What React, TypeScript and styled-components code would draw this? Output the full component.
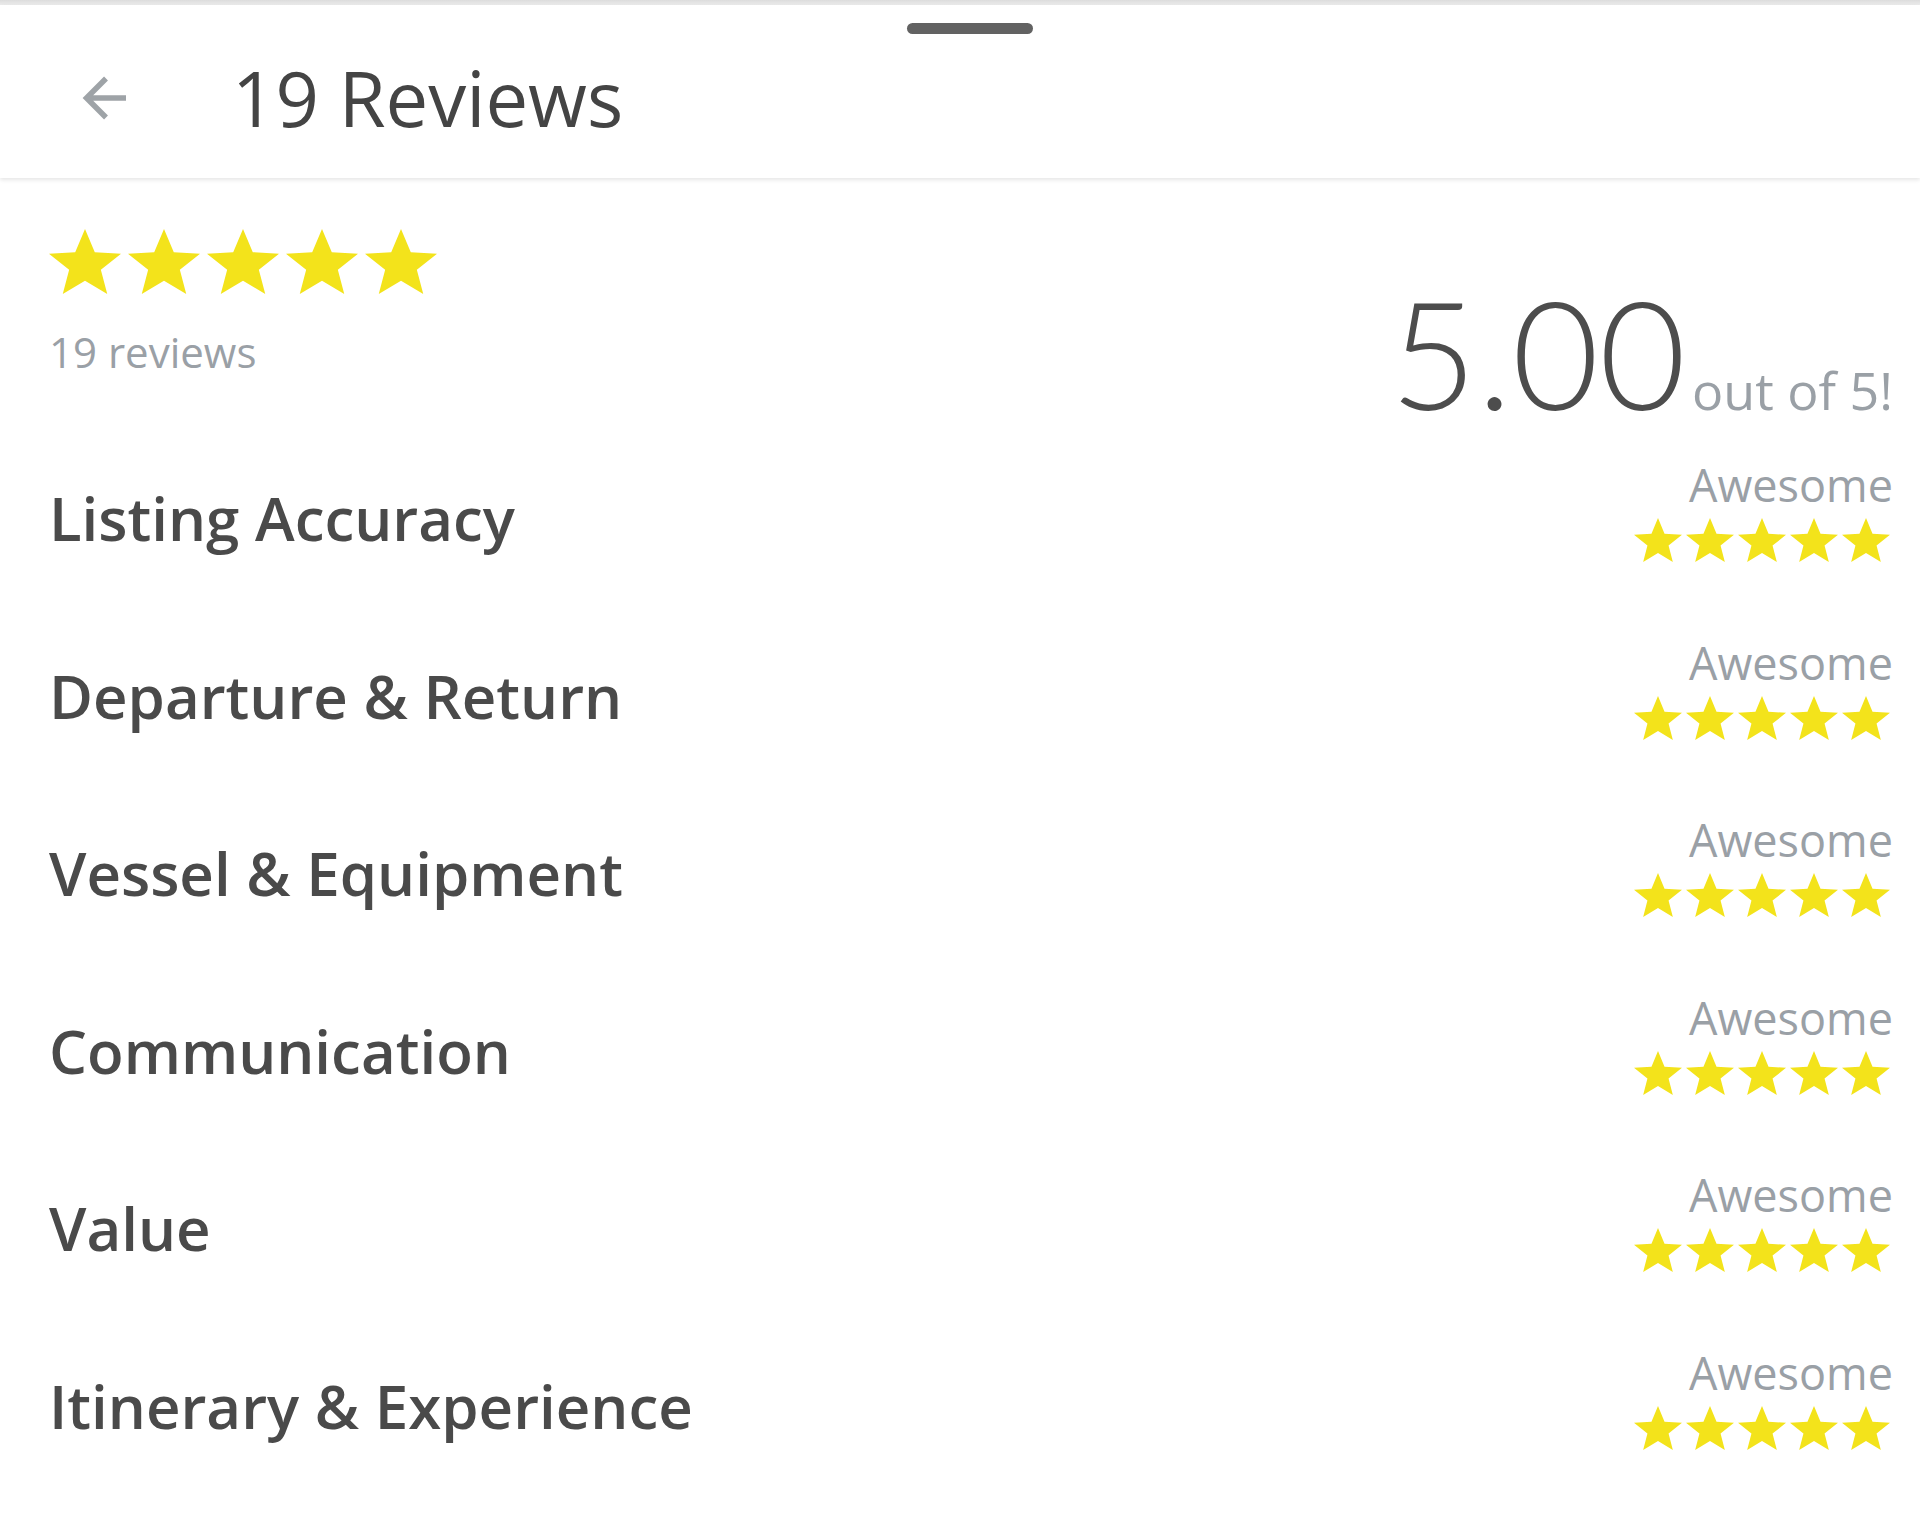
import React from 'react';
import styled, { createGlobalStyle } from 'styled-components';

const GlobalStyle = createGlobalStyle`
  html, body {
    margin: 0;
    padding: 0;
    background: #ffffff;
  }
  body {
    font-family: 'Open Sans', 'Noto Sans', 'Liberation Sans', sans-serif;
    color: #4a4a4a;
  }
`;

// slightly chubby star, like the rating widget in the app
const STAR_POINTS =
  '50,0 63.6,33.9 100,36.3 72,59.7 80.9,95.1 50,75.7 19.1,95.1 28,59.7 0,36.3 36.4,33.9';

const categories = [
  'Listing Accuracy',
  'Departure & Return',
  'Vessel & Equipment',
  'Communication',
  'Value',
  'Itinerary & Experience',
];

const Page = styled.div`
  width: 100%;
  min-height: 1515px;
  display: flex;
  flex-direction: column;
`;

const TopEdge = styled.div`
  height: 5px;
  background: linear-gradient(#dcdcdc, #ececec);
`;

const Header = styled.header`
  display: flex;
  flex-direction: column;
  padding-bottom: 35px;
  background: #fff;
  box-shadow: 0 2px 4px rgba(0, 0, 0, 0.1);
  position: relative;
  z-index: 1;
`;

const Handle = styled.div`
  align-self: center;
  width: 126px;
  height: 11px;
  margin: 18px 0 0 20px;
  border-radius: 6px;
  background: #626262;
`;

const TitleBar = styled.div`
  display: flex;
  align-items: center;
  margin-top: 18px;
  padding-left: 82px;
`;

const BackButton = styled.button`
  display: flex;
  align-items: center;
  justify-content: center;
  width: 46px;
  height: 46px;
  padding: 0;
  border: none;
  background: none;
  cursor: pointer;
`;

const Title = styled.h1`
  margin: 0 0 0 104px;
  font-size: 76px;
  line-height: 1.2;
  font-weight: 400;
  color: #444;
`;

const Summary = styled.section`
  display: flex;
  justify-content: space-between;
  align-items: flex-start;
  padding: 51px 27px 19px 49px;
`;

const SummaryLeft = styled.div`
  display: flex;
  flex-direction: column;
`;

const StarRow = styled.div<{ $gap: number }>`
  display: flex;
  gap: ${p => p.$gap}px;
`;

const ReviewCount = styled.div`
  margin-top: 33px;
  font-size: 42px;
  line-height: 1.2;
  color: #9aa0a6;
`;

const Score = styled.div`
  display: flex;
  align-items: baseline;
  margin-top: 48px;
`;

// the app uses a light cut for the big number
const ScoreValue = styled.span`
  font-family: 'Lato', 'Open Sans', sans-serif;
  font-size: 150px;
  line-height: 1;
  font-weight: 300;
  color: #4d4d4d;
`;

const ScoreSuffix = styled.span`
  margin-left: 6px;
  font-size: 52px;
  color: #9aa0a6;
`;

const RatingList = styled.div`
  display: flex;
  flex-direction: column;
`;

const RatingRow = styled.div`
  display: flex;
  justify-content: space-between;
  align-items: flex-start;
  height: 177.5px;
  box-sizing: border-box;
  padding: 12px 27px 0 49px;
`;

const RatingLabel = styled.div`
  margin-top: 24px;
  font-size: 60px;
  line-height: 1.2;
  font-weight: 600;
  color: #4a4a4a;
`;

const RatingSide = styled.div`
  display: flex;
  flex-direction: column;
  align-items: flex-end;
`;

const RatingWord = styled.div`
  font-size: 45px;
  line-height: 1.2;
  color: #9aa0a6;
`;

const SmallStars = styled(StarRow)`
  margin-top: 6px;
  margin-right: 3px;
`;

const Star = ({ w, h }: { w: number; h: number }) => (
  <svg width={w} height={h} viewBox='0 0 100 95.1' preserveAspectRatio='none'>
    <polygon points={STAR_POINTS} fill='#f3e31b' />
  </svg>
);

const Stars = ({ w, h }: { w: number; h: number }) => (
  <>
    {[0, 1, 2, 3, 4].map(i => (
      <Star key={i} w={w} h={h} />
    ))}
  </>
);

const BackArrow = () => (
  <svg width='46' height='46' viewBox='0 0 46 46' fill='none'>
    <path
      d='M44 23 H5 M24 3.5 L4.5 23 L24 42.5'
      stroke='#9ea3a7'
      strokeWidth='5.5'
    />
  </svg>
);

export default function App() {
  return (
    <Page>
      <GlobalStyle />
      <TopEdge />
      <Header>
        <Handle />
        <TitleBar>
          <BackButton aria-label='Back'>
            <BackArrow />
          </BackButton>
          <Title>19 Reviews</Title>
        </TitleBar>
      </Header>

      <Summary>
        <SummaryLeft>
          <StarRow $gap={7}>
            <Stars w={72} h={65} />
          </StarRow>
          <ReviewCount>19 reviews</ReviewCount>
        </SummaryLeft>
        <Score>
          <ScoreValue>5.00</ScoreValue>
          <ScoreSuffix>out of 5!</ScoreSuffix>
        </Score>
      </Summary>

      <RatingList>
        {categories.map(name => (
          <RatingRow key={name}>
            <RatingLabel>{name}</RatingLabel>
            <RatingSide>
              <RatingWord>Awesome</RatingWord>
              <SmallStars $gap={4}>
                <Stars w={48} h={44} />
              </SmallStars>
            </RatingSide>
          </RatingRow>
        ))}
      </RatingList>
    </Page>
  );
}
